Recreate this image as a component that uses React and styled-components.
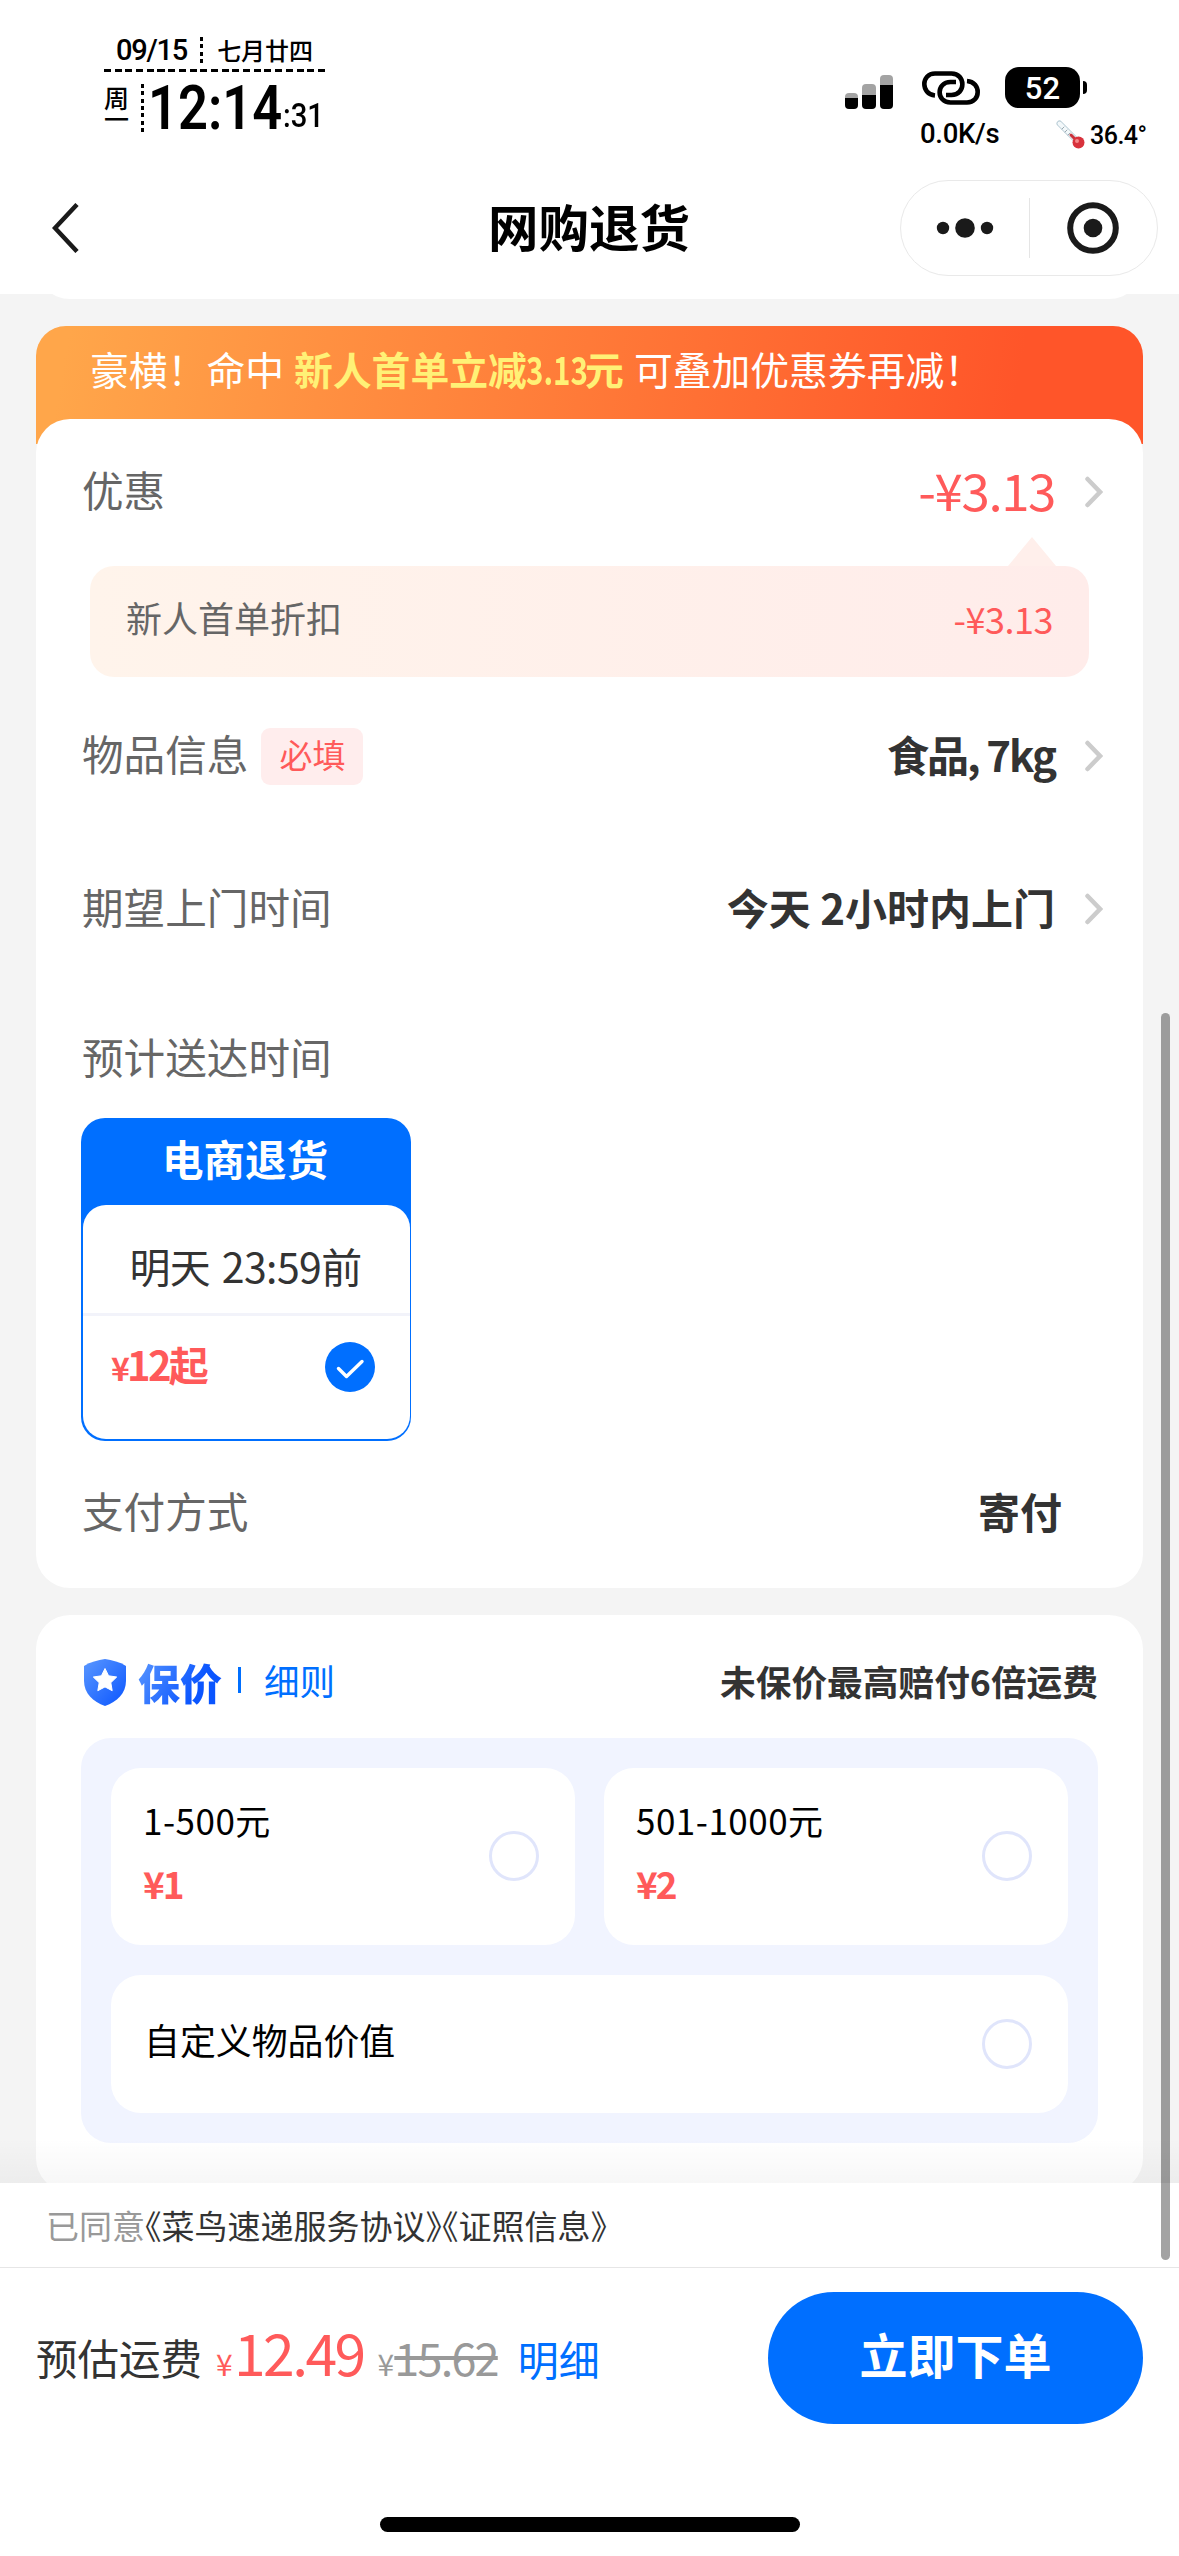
import React, { useState } from "react";
import styled, { createGlobalStyle } from "styled-components";

const tiers = [
  { id: "a", range: "1-500元", price: "¥1" },
  { id: "b", range: "501-1000元", price: "¥2" },
];

function Arrow() {
  return (
    <ArrowIcon viewBox="0 0 18 32">
      <path d="M2.5 3 L15 16 L2.5 29" />
    </ArrowIcon>
  );
}

function StatusBar() {
  return (
    <Status>
      <Clock>
        <DateRow>
          <DateText>09/15</DateText>
          <Dots $h={26} />
          <Lunar>七月廿四</Lunar>
        </DateRow>
        <DashLine />
        <TimeRow>
          <Weekday>周一</Weekday>
          <Dots $h={49} />
          <Time>12:14</Time>
          <Seconds>:31</Seconds>
        </TimeRow>
      </Clock>
      <Indicators>
        <IconRow>
          <Signal>
            <Bar $h={16} $off={5} />
            <Bar $h={25} $off={11} />
            <Bar $h={34} $off={10} />
          </Signal>
          <LinkIcon viewBox="0 0 58 34">
            <path d="M13 24.500 C-1.500 23 -1 2.500 13 2.500 H29.500 C44 2.500 44 24 29.500 24 H24" />
            <path d="M34 11 H28.500 C14 11 14 31.500 28.500 31.500 H45 C59 31.500 59.500 11 45 10" />
          </LinkIcon>
          <Battery>52</Battery>
          <BatteryCap />
        </IconRow>
        <InfoRow>
          <Speed>0.0K/s</Speed>
          <Thermo viewBox="0 0 30 30">
            <path d="M3.500 3.500 L21 21" stroke="#b9cdd6" strokeWidth="6" />
            <path d="M3.500 3.500 L21 21" stroke="#f3f8fa" strokeWidth="4" />
            <path d="M6 9 l2 -2 M9 12 l2 -2 M12 15 l2 -2" stroke="#9aa9b0" strokeWidth="1" />
            <path d="M15 15 L21 21" stroke="#c8323c" strokeWidth="3" />
            <circle cx="22.500" cy="22.500" r="6" fill="#d8323c" />
            <circle cx="21" cy="21" r="2" fill="#f58a8a" />
          </Thermo>
          <Temp>36.4°</Temp>
        </InfoRow>
      </Indicators>
    </Status>
  );
}

function NavBar() {
  return (
    <Nav>
      <BackIcon viewBox="0 0 28 50">
        <path d="M25 1.500 L3 25 L25 48.500" />
      </BackIcon>
      <Title>网购退货</Title>
      <Capsule>
        <CapsuleSide>
          <svg width="58" height="22" viewBox="0 0 58 22" fill="#1a1a1a">
            <circle cx="7" cy="11" r="6.200" />
            <circle cx="29" cy="11" r="9.800" />
            <circle cx="51" cy="11" r="6.200" />
          </svg>
        </CapsuleSide>
        <CapsuleLine />
        <CapsuleSide>
          <svg width="52" height="52" viewBox="0 0 52 52">
            <circle cx="26" cy="26" r="22.800" fill="none" stroke="#1a1a1a" strokeWidth="6" />
            <circle cx="26" cy="26" r="9.300" fill="#1a1a1a" />
          </svg>
        </CapsuleSide>
      </Capsule>
    </Nav>
  );
}

function App() {
  const [insured, setInsured] = useState(null);

  return (
    <Screen>
      <GlobalStyle />
      <StatusBar />
      <NavBar />
      <Content>
        <PrevCard />
        <Banner>
          豪横！命中<b>新人首单立减<i>3.13</i>元</b>可叠加优惠券再减！
        </Banner>
        <OrderCard>
          <Row $h={145}>
            <Label>优惠</Label>
            <Discount>-¥3.13</Discount>
            <Arrow />
          </Row>
          <Bubble>
            <span>新人首单折扣</span>
            <SmallDiscount>-¥3.13</SmallDiscount>
          </Bubble>
          <Row $h={158}>
            <Label>物品信息</Label>
            <Tag>必填</Tag>
            <Value $tight>食品, 7kg</Value>
            <Arrow />
          </Row>
          <Row $h={148}>
            <Label>期望上门时间</Label>
            <Value>今天 2小时内上门</Value>
            <Arrow />
          </Row>
          <Row $h={152}>
            <Label>预计送达时间</Label>
          </Row>
          <Product>
            <ProductName>电商退货</ProductName>
            <ProductBody>
              <Arrival>明天 23:59前</Arrival>
              <ProductFoot>
                <ProductPrice>
                  <small>¥</small>12起
                </ProductPrice>
                <CheckIcon viewBox="0 0 50 50">
                  <circle cx="25" cy="25" r="25" />
                  <path d="M13.500 26.500 L21.500 34.500 L37 19.500" />
                </CheckIcon>
              </ProductFoot>
            </ProductBody>
          </Product>
          <Row $h={144}>
            <Label>支付方式</Label>
            <PayValue>寄付</PayValue>
          </Row>
        </OrderCard>
        <InsureCard>
          <InsureHead>
            <ShieldIcon viewBox="0 0 42 47">
              <defs>
                <linearGradient id="shield" x1="0" y1="0" x2="1" y2="1">
                  <stop offset="0" stopColor="#5a97ff" />
                  <stop offset="1" stopColor="#0a55ff" />
                </linearGradient>
              </defs>
              <path
                d="M21 0 C28 1 36 3 42 7 V22 C42 34 33 43 21 47 C9 43 0 34 0 22 V7 C6 3 14 1 21 0 Z"
                fill="url(#shield)"
              />
              <path
                d="M21 9.500 L24.600 16.800 L32.700 18 L26.800 23.700 L28.200 31.700 L21 27.900 L13.800 31.700 L15.200 23.700 L9.300 18 L17.400 16.800 Z"
                fill="#fff"
                stroke="#fff"
                strokeLinejoin="round"
              />
            </ShieldIcon>
            <InsureTitle>保价</InsureTitle>
            <InsureLine />
            <Rules>细则</Rules>
            <InsureTip>未保价最高赔付6倍运费</InsureTip>
          </InsureHead>
          <Options>
            {tiers.map((tier) => (
              <Option key={tier.id} onClick={() => setInsured(tier.id)}>
                <OptionText>
                  <Range>{tier.range}</Range>
                  <OptionPrice>{tier.price}</OptionPrice>
                </OptionText>
                <Radio $on={insured === tier.id} />
              </Option>
            ))}
            <CustomOption onClick={() => setInsured("custom")}>
              <CustomText>自定义物品价值</CustomText>
              <Radio $on={insured === "custom"} />
            </CustomOption>
          </Options>
        </InsureCard>
        <Fade />
      </Content>
      <Footer>
        <Agreement>
          <span>已同意</span>
          <a>《菜鸟速递服务协议》</a>
          <a>《证照信息》</a>
        </Agreement>
        <Checkout>
          <FeeLabel>预估运费</FeeLabel>
          <Fee>
            <small>¥</small>12.49
          </Fee>
          <OldFee>
            <small>¥</small>
            <s>15.62</s>
          </OldFee>
          <Detail>明细</Detail>
          <Submit>立即下单</Submit>
        </Checkout>
        <HomeBar />
      </Footer>
      <Scrollbar />
    </Screen>
  );
}
export default App;

const GlobalStyle = createGlobalStyle`
  * {
    box-sizing: border-box;
  }
  body {
    margin: 0;
    font-family: "Noto Sans CJK SC", sans-serif;
    line-height: 1;
    color: #333;
    white-space: nowrap;
  }
`;

const Screen = styled.div`
  position: relative;
  display: flex;
  flex-direction: column;
  width: 1179px;
  height: 2556px;
  overflow: hidden;
  background: #f4f4f4;
`;

/* status bar */
const Status = styled.div`
  display: flex;
  justify-content: space-between;
  flex: none;
  height: 162px;
  padding: 36px 31px 0 104px;
  background: #fff;
  color: #000;
`;
const Clock = styled.div`
  width: 221px;
`;
const DateRow = styled.div`
  display: flex;
  align-items: center;
  justify-content: center;
  height: 28px;
  font-size: 24px;
`;
const DateText = styled.span`
  font-family: Roboto, sans-serif;
  font-size: 29px;
  font-weight: 500;
  letter-spacing: -1.2px;
`;
const Lunar = styled.span`
  font-weight: 500;
`;
const Dots = styled.i`
  flex: none;
  width: 3px;
  height: ${(props) => props.$h}px;
  margin: 0 14px 0 13px;
  background: repeating-linear-gradient(#000 0 4px, transparent 4px 7.3px);
`;
const DashLine = styled.div`
  height: 3px;
  margin-top: 5px;
  background: repeating-linear-gradient(90deg, #000 0 7px, transparent 7px 10.7px);
`;
const TimeRow = styled.div`
  display: flex;
  align-items: center;
  height: 50px;
  margin-top: 11px;

  ${Dots} {
    margin: 0 4px 0 12px;
  }
`;
const Weekday = styled.div`
  flex: none;
  width: 25px;
  font-size: 25px;
  font-weight: 500;
  line-height: 21px;
  white-space: normal;
  word-break: break-all;
`;
const Time = styled.span`
  flex: none;
  width: 135px;
  font-family: Roboto, sans-serif;
  font-size: 61px;
  font-weight: 600;
  transform: scaleX(0.86);
  transform-origin: left;
`;
const Seconds = styled.span`
  flex: none;
  padding-top: 13px;
  font-family: Roboto, sans-serif;
  font-size: 34px;
  font-weight: 500;
  transform: scaleX(0.86);
  transform-origin: left;
`;
const Indicators = styled.div`
  width: 304px;
  padding-top: 31px;
`;
const IconRow = styled.div`
  display: flex;
  align-items: center;
  height: 41px;
`;
const Signal = styled.div`
  display: flex;
  align-items: flex-end;
  gap: 4px;
  height: 43px;
  margin: 0 29px 0 1px;
`;
const Bar = styled.i`
  width: 13.3px;
  height: ${(props) => props.$h}px;
  border-radius: 4px;
  background: linear-gradient(#a3a3a3 ${(props) => props.$off}px, #000 ${(props) => props.$off}px);
`;
const LinkIcon = styled.svg`
  width: 58px;
  height: 34px;
  margin-right: 25px;
  fill: none;
  stroke: #000;
  stroke-width: 4.6;
`;
const Battery = styled.div`
  width: 75px;
  height: 41px;
  border-radius: 14px;
  background: #000;
  color: #fff;
  font-family: Roboto, sans-serif;
  font-size: 31px;
  font-weight: 500;
  line-height: 43px;
  text-align: center;
`;
const BatteryCap = styled.i`
  width: 4px;
  height: 13px;
  margin-left: 3px;
  border-radius: 0 4px 4px 0;
  background: #000;
`;
const InfoRow = styled.div`
  display: flex;
  align-items: center;
  height: 30px;
  margin-top: 12px;
  padding-left: 76px;
  font-family: Roboto, sans-serif;
  font-weight: 500;
`;
const Speed = styled.span`
  width: 136px;
  padding-bottom: 3px;
  font-size: 27.5px;
  letter-spacing: -0.3px;
`;
const Thermo = styled.svg`
  width: 30px;
  height: 30px;
  margin-right: 4px;
  fill: none;
  stroke-linecap: round;
`;
const Temp = styled.span`
  font-size: 25px;
  letter-spacing: -0.5px;
`;

/* nav bar */
const Nav = styled.div`
  display: flex;
  align-items: center;
  flex: none;
  height: 132px;
  padding: 0 21px 0 52px;
  background: #fff;
`;
const BackIcon = styled.svg`
  width: 28px;
  height: 50px;
  fill: none;
  stroke: #1a1a1a;
  stroke-width: 4.5;
`;
const Title = styled.h1`
  margin: 0 0 5px 408px;
  color: #000;
  font-size: 50.5px;
  font-weight: 700;
`;
const Capsule = styled.div`
  display: flex;
  align-items: center;
  width: 258px;
  height: 96px;
  margin-left: auto;
  border: 1px solid #e9e9e9;
  border-radius: 48px;
`;
const CapsuleSide = styled.div`
  display: flex;
  flex: 1;
  justify-content: center;
`;
const CapsuleLine = styled.i`
  width: 1px;
  height: 60px;
  background: #e5e5e5;
`;

/* scrolling part */
const Content = styled.main`
  position: relative;
  flex: 1;
  min-height: 0;
  padding: 0 36px;
  overflow: hidden;
`;
const PrevCard = styled.div`
  height: 34px;
  margin-top: -29px;
  border-radius: 0 0 34px 34px;
  background: #fff;
`;
const Banner = styled.div`
  height: 118px;
  margin-top: 27px;
  padding: 23px 0 0 54px;
  border-radius: 30px 30px 0 0;
  background: linear-gradient(100deg, #ffa64a 3%, #ff5529 88%);
  color: #fff;
  font-size: 38.8px;

  b {
    margin: 0 10px 0 10px;
    color: #fff176;
  }
  i {
    display: inline-block;
    margin: 0 -22px 0 -1px;
    font-style: normal;
    transform: scaleX(0.76);
    transform-origin: left;
  }
`;
const OrderCard = styled.section`
  position: relative;
  height: 1169px;
  margin-top: -25px;
  border-radius: 34px;
  background: #fff;
`;
const Row = styled.div`
  display: flex;
  align-items: center;
  height: ${(props) => props.$h}px;
  padding: 0 40px 0 46px;
`;
const Label = styled.span`
  margin-right: auto;
  padding-bottom: 4px;
  color: #666;
  font-size: 41.6px;
`;
const Value = styled.span`
  padding-bottom: 4px;
  font-size: 42px;
  font-weight: 700;
  letter-spacing: ${(props) => (props.$tight ? "-2px" : "0")};
`;
const Discount = styled.span`
  padding-bottom: 5px;
  color: #ff5a5a;
  font-size: 51px;
  letter-spacing: -1.4px;
`;
const ArrowIcon = styled.svg`
  width: 18px;
  height: 32px;
  margin-left: 30px;
  fill: none;
  stroke: #ccc;
  stroke-width: 4.5;
  stroke-linecap: round;
`;
const Bubble = styled.div`
  position: relative;
  display: flex;
  align-items: center;
  justify-content: space-between;
  height: 111px;
  margin: 2px 54px 0;
  padding: 0 36px 9px 36px;
  border-radius: 24px;
  background: linear-gradient(90deg, #fff4eb, #ffecea);
  color: #666;
  font-size: 36px;

  &::before {
    content: "";
    position: absolute;
    top: -29px;
    right: 33px;
    border: 24px solid transparent;
    border-top: 0;
    border-bottom: 29px solid #ffefeb;
  }
`;
const SmallDiscount = styled.span`
  padding-top: 2px;
  color: #ff5a5a;
  letter-spacing: -0.5px;
`;
const Tag = styled.span`
  display: flex;
  align-items: center;
  justify-content: center;
  width: 102px;
  height: 57px;
  margin: 0 auto 0 13px;
  padding-bottom: 3px;
  border-radius: 9px;
  background: #ffeded;
  color: #ff5a5a;
  font-size: 33px;

  ${Label}:has(+ &) {
    margin-right: 0;
  }
`;
const PayValue = styled(Value)`
  margin-right: 41px;
`;
const Product = styled.div`
  display: flex;
  flex-direction: column;
  width: 330px;
  height: 323px;
  margin: -17px 0 0 45px;
  padding: 0 1px 2px 2px;
  border-radius: 24px;
  background: #006fff;
`;
const ProductName = styled.div`
  height: 87px;
  padding-right: 3px;
  color: #fff;
  font-size: 41.5px;
  font-weight: 700;
  line-height: 80px;
  text-align: center;
`;
const ProductBody = styled.div`
  flex: 1;
  border-radius: 23px;
  background: #fff;
`;
const Arrival = styled.div`
  height: 111px;
  padding-right: 2px;
  border-bottom: 3px solid #f2f3fa;
  font-size: 41px;
  letter-spacing: -0.6px;
  line-height: 120px;
  text-align: center;
  word-spacing: 3px;
`;
const ProductFoot = styled.div`
  display: flex;
  align-items: center;
  justify-content: space-between;
  height: 101px;
  padding: 0 35px 0 28px;
`;
const ProductPrice = styled.span`
  padding-bottom: 5px;
  color: #ff5a5a;
  font-size: 40px;
  font-weight: 700;
  letter-spacing: -2.8px;

  small {
    font-size: 32px;
  }
`;
const CheckIcon = styled.svg`
  width: 50px;
  height: 50px;
  fill: #006fff;

  path {
    fill: none;
    stroke: #fff;
    stroke-width: 3.4;
    stroke-linecap: round;
    stroke-linejoin: round;
  }
`;

/* insurance */
const InsureCard = styled.section`
  height: 577px;
  margin-top: 27px;
  padding: 0 45px;
  border-radius: 34px;
  background: #fff;
`;
const InsureHead = styled.div`
  display: flex;
  align-items: center;
  height: 123px;
  padding: 12px 0 0 3px;
`;
const ShieldIcon = styled.svg`
  width: 42px;
  height: 47px;
`;
const InsureTitle = styled.h2`
  margin: 0 0 2px 12px;
  padding: 4px 0;
  background: linear-gradient(120deg, #5a97ff, #0a55ff 70%);
  background-clip: text;
  color: transparent;
  font-size: 42px;
  font-weight: 900;
`;
const InsureLine = styled.i`
  width: 3px;
  height: 26px;
  margin: 0 23px 6px 16px;
  background: #006fff;
`;
const Rules = styled.a`
  padding-bottom: 5px;
  color: #006fff;
  font-size: 35.5px;
`;
const InsureTip = styled.span`
  margin-left: auto;
  padding-bottom: 3px;
  font-size: 35.7px;
  font-weight: 700;
`;
const Options = styled.div`
  display: grid;
  grid-template: 177px 138px / 1fr 1fr;
  gap: 30px 29px;
  height: 405px;
  padding: 30px;
  border-radius: 30px;
  background: #f1f4ff;
`;
const Option = styled.div`
  display: flex;
  align-items: center;
  justify-content: space-between;
  padding: 0 36px 0 32px;
  border-radius: 30px;
  background: #fff;
  color: #000;
`;
const CustomOption = styled(Option)`
  grid-column: span 2;
`;
const OptionText = styled.div`
  display: flex;
  flex-direction: column;
  gap: 28px;
  padding-bottom: 10px;
`;
const Range = styled.span`
  font-size: 35px;
  letter-spacing: 0.5px;
`;
const CustomText = styled.span`
  padding: 0 0 8px 1px;
  font-size: 35.9px;
`;
const OptionPrice = styled.span`
  color: #ff5a5a;
  font-size: 37px;
  font-weight: 700;
  letter-spacing: -2px;
`;
const Radio = styled.i`
  width: 50px;
  height: 50px;
  margin-bottom: 1px;
  border: ${(props) => (props.$on ? "14px solid #006fff" : "3.5px solid #e0e5fb")};
  border-radius: 50%;
`;
const Fade = styled.div`
  position: absolute;
  left: 0;
  right: 0;
  bottom: 0;
  height: 45px;
  background: linear-gradient(transparent, rgba(0, 0, 0, 0.03));
`;

/* footer */
const Footer = styled.footer`
  flex: none;
  height: 373px;
  background: #fff;
`;
const Agreement = styled.div`
  display: flex;
  align-items: center;
  height: 85px;
  padding: 0 0 0 46px;
  border-bottom: 1px solid #e6e6e6;
  color: #999;
  font-size: 33px;

  /* half-width book title marks */
  a {
    color: #333;
    font-feature-settings: "halt";
  }
`;
const Checkout = styled.div`
  display: flex;
  align-items: center;
  height: 132px;
  margin-top: 24px;
  padding: 0 36px;
`;
const FeeLabel = styled.span`
  font-size: 41.5px;
`;
const Fee = styled.span`
  margin: 0 0 13px 14px;
  color: #ff5a5a;
  font-size: 57px;
  letter-spacing: -2.6px;

  small {
    font-size: 30px;
    margin-right: 4px;
  }
`;
const OldFee = styled.span`
  margin: 0 0 4px 14px;
  color: #999;
  font-size: 45px;
  letter-spacing: -1.8px;

  small {
    font-size: 30px;
    margin-right: 2px;
  }
`;
const Detail = styled.a`
  margin-left: 20px;
  color: #006fff;
  font-size: 41px;
`;
const Submit = styled.button`
  width: 375px;
  height: 132px;
  margin-left: auto;
  padding: 0 0 10px;
  border: 0;
  border-radius: 66px;
  background: #006fff;
  color: #fff;
  font-family: inherit;
  font-size: 48px;
  font-weight: 700;
`;
const HomeBar = styled.div`
  width: 420px;
  height: 15px;
  margin: 93px auto 0;
  border-radius: 8px;
  background: #000;
`;

const Scrollbar = styled.div`
  position: absolute;
  top: 1013px;
  left: 1161px;
  width: 9px;
  height: 1247px;
  border-radius: 5px;
  background: rgba(0, 0, 0, 0.36);
`;
